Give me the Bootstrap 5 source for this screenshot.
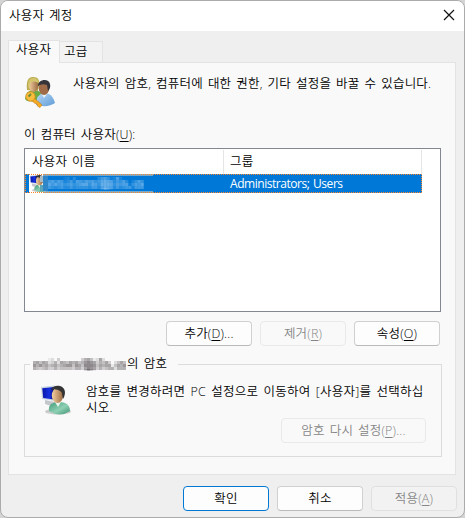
<!DOCTYPE html>
<html lang="ko">
<head>
<meta charset="utf-8">
<meta name="viewport" content="width=device-width, initial-scale=1">
<title>사용자 계정</title>
<link href="https://cdn.jsdelivr.net/npm/bootstrap@5.3.0/dist/css/bootstrap.min.css" rel="stylesheet">
<style>
html,body{height:100%;overflow:hidden}
body{background:#d4d4d4;font:350 12.5px/15px "Open Sans","Noto Sans CJK KR",sans-serif;color:#000;word-spacing:1.6px;letter-spacing:.19px}
.dialog{width:465px;height:518px;border:1px solid #ababab;border-radius:8px;background:#efefef;overflow:hidden}
.titlebar{height:30px;padding:0 9px 2px 8px;background:#fff}
.tabs{height:31px;padding-left:7px}
.tab-item{border:1px solid #e3e3e3;border-bottom:0;background:#f9f9f9}
.tab-on{width:52px;height:23px;margin-bottom:-1px;padding:1px 0 0 7px;z-index:2}
.tab-off{width:44px;height:21px;margin-left:-1px;padding:2px 0 0 4px;background:#f3f3f3}
.page{width:448px;height:413px;margin-left:7px;padding:0 14px 0 15px;border:1px solid #e3e3e3;background:#f9f9f9}
.intro{height:64px;padding-top:13px}
.intro-text{margin-left:17px}
.list-label{height:21px}
.list{width:417px;height:164px;border:1px solid #828790;background:#fff}
.head{height:25px;width:397px}
.c1{width:199px;padding:4px 0 0 7px;border-right:1px solid #e5e5e5;margin-top:1px}
.c2{width:198px;padding:4px 0 0 6px;border-right:1px solid #e5e5e5;margin-top:1px}
.sel{width:397px;height:19px;background:#0078d7;color:#fff;outline:1px dotted #ff8728;outline-offset:-1px}
.sel-name{width:205px;padding-left:4px}
.latin{font-size:12px;font-weight:400;letter-spacing:-.46px;word-spacing:1px;line-height:19px}
.push{height:25px;width:86px;padding:0;border:1px solid #d0d0d0;border-bottom-color:#bababa;border-radius:4px;background:#fdfdfd;font-size:inherit;font-weight:inherit;line-height:15px;letter-spacing:inherit;word-spacing:inherit;color:#000;white-space:nowrap}
.push:disabled{opacity:1;color:#868686;border-color:#e9e9e9;background:#f9f9f9}
.push.main{border-color:#0078d4}
.push.reset{width:145px}
.actions{gap:8px;margin-top:9px;padding-right:1px}
.group{width:418px;height:93px;border:1px solid #dcdcdc;margin-top:18px}
.legend-row{width:148px;height:15px;margin:-9px 0 0 5px;padding-left:3px;background:#f9f9f9}
.advice{padding:13px 0 0 15px}
.advice-text{margin-left:14px;line-height:16px;white-space:nowrap;letter-spacing:.28px}
.reset-row{padding:2px 15px 0 0}
.foot{margin-top:11px;padding-right:7px;gap:8px}
.foot .push:disabled{background:#f2f2f2;border-color:#e0e0e0}
u{text-underline-offset:2px}
svg{display:block;flex:none}
</style>
<script src="https://cdn.jsdelivr.net/npm/bootstrap@5.3.0/dist/js/bootstrap.bundle.min.js"></script>
</head>
<body>
<svg width="0" height="0" class="position-absolute">
<defs>
<linearGradient id="face" x1="0" x2="1"><stop stop-color="#f3cfa0"/><stop offset="1" stop-color="#9b6a42"/></linearGradient>
<linearGradient id="teal" x1="0" x2="1" y2="1"><stop stop-color="#3f9a78"/><stop offset=".55" stop-color="#8fd0b4"/><stop offset="1" stop-color="#3c9272"/></linearGradient>
<linearGradient id="sky" x1="0" x2="1" y2="1"><stop stop-color="#b9daf6"/><stop offset="1" stop-color="#5f9bd6"/></linearGradient>
<linearGradient id="screen" x1="0" x2="1"><stop stop-color="#0a16a8"/><stop offset=".6" stop-color="#1630e0"/><stop offset="1" stop-color="#07107c"/></linearGradient>
<symbol id="pc-user" viewBox="0 0 32 32">
<ellipse cx="18" cy="27.5" rx="13" ry="3" fill="#c9cccb"/>
<path d="M5 16 15 18 14 23 5 20Z" fill="#c4c8cc"/>
<path d="M1 3 15 1.5 15 17 2 15Z" fill="#c8d4e2"/><path d="M2.3 4.2 14 3 14 15.5 3.2 14Z" fill="url(#screen)"/>
<path d="M9 27C8 21 12 18 19 18S30 21 30 27Q20 34 9 27Z" fill="url(#teal)"/>
<path d="M15 18 18 23 21 18Z" fill="#e9f5ee"/>
<ellipse cx="17.5" cy="11.5" rx="5.7" ry="7.5" fill="url(#face)"/>
<path d="M11 6C13 0 23 1 24.5 6Q26 10 23 15L21.5 8Q17 4 11 6Z" fill="#343434"/>
</symbol>
</defs>
</svg>
<main class="dialog">
<div class="titlebar d-flex align-items-center justify-content-between"><span>사용자 계정</span>
<svg width="12" height="12"><path d="M1 1 11 11M11 1 1 11" stroke="#111" stroke-width="1.2"/></svg></div>
<div class="tabs d-flex align-items-end"><div class="tab-item tab-on position-relative">사용자</div><div class="tab-item tab-off">고급</div></div>
<section class="page">
<div class="intro d-flex">
<svg width="32" height="32" viewBox="0 0 32 32">
<path d="M1 23Q2 14 10 14T19 23L14 26 3 25Z" fill="#6bab45"/>
<path d="M3 14C2 5 4 1 9 1S16 4 15 10L14 15Z" fill="#b9a94c"/>
<ellipse cx="9.5" cy="9.5" rx="4.7" ry="6.5" fill="url(#face)"/>
<path d="M4 9Q4 2 9 2T15 7Q9 4 6 7L5 14Z" fill="#d2c66c"/>
<path d="M12 29Q12 18 20 17T31 27Q24 32 12 29Z" fill="url(#sky)"/>
<path d="M17 17 20 22 24 17Z" fill="#e6f2fc"/>
<ellipse cx="20" cy="12" rx="5.2" ry="7" fill="#a06c48"/>
<path d="M14 10C14 3 25 2 26 8Q27 12 24 15L23 9Q18 7 14 10Z" fill="#34343a"/>
<path d="M9 21 18 29 16 31.5 13.5 30 13 28 10.5 27 7 24Z" fill="#f6ab25" stroke="#c57b12" stroke-width=".6"/>
<circle cx="6.5" cy="20.5" r="4.7" fill="#f8bd3c" stroke="#d18a16" stroke-width=".8"/><path d="M4.5 20.5 7 18" stroke="#6f8c35" stroke-width="2"/>
</svg>
<div class="intro-text">사용자의 암호, 컴퓨터에 대한 권한, 기타 설정을 바꿀 수 있습니다.</div></div>
<div class="list-label">이 컴퓨터 사용자(<u>U</u>):</div>
<div class="list"><div class="head d-flex"><div class="c1">사용자 이름</div><div class="c2">그룹</div></div>
<div class="sel d-flex"><div class="sel-name"><svg width="126" height="19">
<path d="M0 0H14V19H0Z" fill="#fff"/><path d="M14 0H124V2H14ZM14 17H124V19H14Z" fill="#79a9c9"/>
<use href="#pc-user" x="0" y="0" width="19" height="19"/><path d="M14 2H19V17H14Z" fill="#2f86c8"/><path d="M11 2H14V8H11Z" fill="#a9bcc6"/><path d="M11 11H14V17H11Z" fill="#5aa6b8"/>
<g id="rowMosaic" transform="translate(19 3) scale(1.03 1)" fill="#a5d0f2"></g></svg></div><span class="latin">Administrators; Users</span></div></div>
<div class="actions d-flex justify-content-end"><button class="btn push">추가(<u>D</u>)...</button><button class="btn push" disabled>제거(<u>R</u>)</button><button class="btn push">속성(<u>O</u>)</button></div>
<div class="group"><div class="legend-row d-flex"><svg width="94" height="15"><g id="legendMosaic" transform="translate(0 2)" fill="#4a4248"></g></svg><span>의 암호</span></div>
<div class="advice d-flex"><svg width="32" height="32"><use href="#pc-user" width="32" height="32"/></svg><div class="advice-text">암호를 변경하려면 PC 설정으로 이동하여 [사용자]를 선택하십<br>시오.</div></div>
<div class="reset-row d-flex justify-content-end"><button class="btn push reset" disabled>암호 다시 설정(<u>P</u>)...</button></div></div>
</section>
<div class="foot d-flex justify-content-end"><button class="btn push main">확인</button><button class="btn push">취소</button><button class="btn push" disabled>적용(<u>A</u>)</button></div>
</main>
<script>
// Masked account name: each digit is the opacity of one block.
const rows = [
  '00000120300000003564126200000000',
  '5646523526546564578763546302464',
  '7575645645677476488874656614657',
  '5434533534444355368763534552555',
  '00000000000000000253100000000000'
];
for (const id of ['rowMosaic', 'legendMosaic']) {
  const g = document.getElementById(id);
  rows.forEach((r, y) => [...r].forEach((v, x) => {
    if (v === '0') return;
    const b = document.createElementNS('http://www.w3.org/2000/svg', 'rect');
    b.setAttribute('x', x * 3); b.setAttribute('y', y * 3 - (y === 4 ? 1 : 0));
    b.setAttribute('width', 3); b.setAttribute('height', y === 4 ? 2 : 3);
    b.setAttribute('opacity', v / 13);
    g.appendChild(b);
  }));
}
</script>
</body>
</html>
